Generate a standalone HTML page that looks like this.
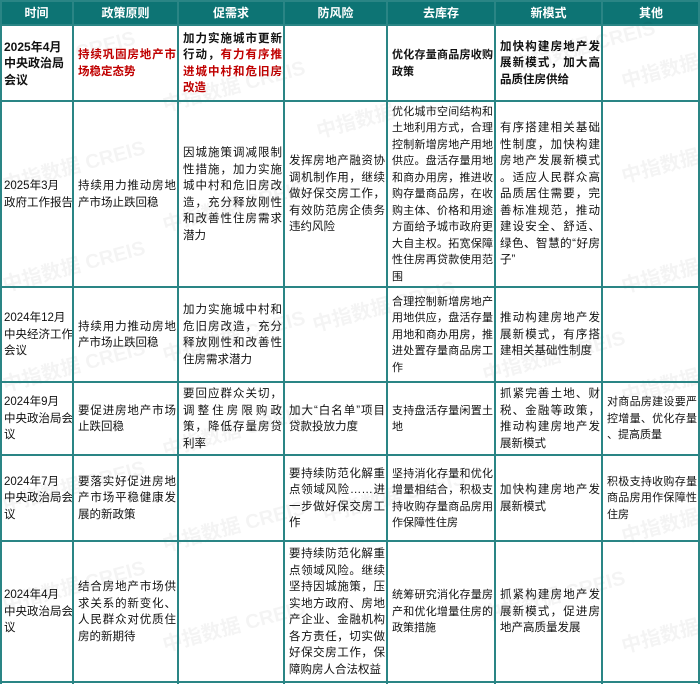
<!DOCTYPE html>
<html><head><meta charset="utf-8"><style>
*{margin:0;padding:0;box-sizing:border-box}
body{width:700px;height:684px;background:#fff;position:relative;overflow:hidden;font-family:"Liberation Sans","Noto Sans CJK SC",sans-serif;font-size:11.5px;color:#111}
.c{position:absolute;display:flex;align-items:center;padding:0 2px 0 3px;overflow:hidden}
.s{font-size:11px}
.t{width:100%;line-height:16.5px}
.t p{text-align:justify;text-align-last:justify;white-space:nowrap;letter-spacing:0}
.t p.l{text-align-last:left}
.b{font-weight:bold}
.r{color:#c00000;font-weight:bold}
.h{position:absolute;top:0;height:25px;background:#0d7474;color:#fff;font-weight:bold;font-size:12px;display:flex;align-items:center;justify-content:center}
.vl{position:absolute;top:0;width:2px;height:684px;background:#2a8585}
.hl{position:absolute;left:0;width:700px;height:2px;background:#2a8585}
.w{position:absolute;color:rgba(0,0,0,0.045);font-size:20px;font-weight:bold;transform:rotate(-15deg);white-space:nowrap;pointer-events:none}
</style></head><body>
<div class="h" style="left:0;width:73px">时间</div>
<div class="h" style="left:73px;width:105px">政策原则</div>
<div class="h" style="left:178px;width:106px">促需求</div>
<div class="h" style="left:284px;width:103px">防风险</div>
<div class="h" style="left:387px;width:108px">去库存</div>
<div class="h" style="left:495px;width:107px">新模式</div>
<div class="h" style="left:602px;width:98px">其他</div>

<div class="c b" style="left:1px;top:26px;width:72px;height:75px;font-size:12px"><div class="t"><p class="l">2025年4月</p><p class="l">中央政治局</p><p class="l">会议</p></div></div>
<div class="c" style="left:75px;top:26px;width:103px;height:75px"><div class="t r"><p>持续巩固房地产市</p><p class="l">场稳定态势</p></div></div>
<div class="c b" style="left:180px;top:26px;width:104px;height:75px"><div class="t"><p>加力实施城市更新</p><p>行动，<span class="r">有力有序推</span></p><p class="r">进城中村和危旧房</p><p class="l r">改造</p></div></div>
<div class="c b s" style="left:389px;top:26px;width:106px;height:75px"><div class="t"><p>优化存量商品房收购</p><p class="l">政策</p></div></div>
<div class="c b" style="left:497px;top:26px;width:105px;height:75px"><div class="t"><p>加快构建房地产发</p><p>展新模式，加大高</p><p class="l">品质住房供给</p></div></div>

<div class="c" style="left:1px;top:102px;width:72px;height:185px"><div class="t"><p class="l">2025年3月</p><p class="l">政府工作报告</p></div></div>
<div class="c" style="left:75px;top:102px;width:103px;height:185px"><div class="t"><p>持续用力推动房地</p><p class="l">产市场止跌回稳</p></div></div>
<div class="c" style="left:180px;top:102px;width:104px;height:185px"><div class="t"><p>因城施策调减限制</p><p>性措施，加力实施</p><p>城中村和危旧房改</p><p>造，充分释放刚性</p><p>和改善性住房需求</p><p class="l">潜力</p></div></div>
<div class="c" style="left:286px;top:102px;width:101px;height:185px"><div class="t"><p>发挥房地产融资协</p><p>调机制作用，继续</p><p>做好保交房工作，</p><p>有效防范房企债务</p><p class="l">违约风险</p></div></div>
<div class="c s" style="left:389px;top:102px;width:106px;height:185px"><div class="t"><p>优化城市空间结构和</p><p>土地利用方式，合理</p><p>控制新增房地产用地</p><p>供应。盘活存量用地</p><p>和商办用房，推进收</p><p>购存量商品房，在收</p><p>购主体、价格和用途</p><p>方面给予城市政府更</p><p>大自主权。拓宽保障</p><p>性住房再贷款使用范</p><p class="l">围</p></div></div>
<div class="c" style="left:497px;top:102px;width:105px;height:185px"><div class="t"><p>有序搭建相关基础</p><p>性制度，加快构建</p><p>房地产发展新模式</p><p>。适应人民群众高</p><p>品质居住需要，完</p><p>善标准规范，推动</p><p>建设安全、舒适、</p><p>绿色、智慧的“好房</p><p class="l">子”</p></div></div>

<div class="c" style="left:1px;top:288px;width:72px;height:94px"><div class="t"><p class="l">2024年12月</p><p class="l">中央经济工作</p><p class="l">会议</p></div></div>
<div class="c" style="left:75px;top:288px;width:103px;height:94px"><div class="t"><p>持续用力推动房地</p><p class="l">产市场止跌回稳</p></div></div>
<div class="c" style="left:180px;top:288px;width:104px;height:94px"><div class="t"><p>加力实施城中村和</p><p>危旧房改造，充分</p><p>释放刚性和改善性</p><p class="l">住房需求潜力</p></div></div>
<div class="c s" style="left:389px;top:288px;width:106px;height:94px"><div class="t"><p>合理控制新增房地产</p><p>用地供应，盘活存量</p><p>用地和商办用房，推</p><p>进处置存量商品房工</p><p class="l">作</p></div></div>
<div class="c" style="left:497px;top:288px;width:105px;height:94px"><div class="t"><p>推动构建房地产发</p><p>展新模式，有序搭</p><p class="l">建相关基础性制度</p></div></div>

<div class="c" style="left:1px;top:383px;width:72px;height:72px"><div class="t"><p class="l">2024年9月</p><p class="l">中央政治局会</p><p class="l">议</p></div></div>
<div class="c" style="left:75px;top:383px;width:103px;height:72px"><div class="t"><p>要促进房地产市场</p><p class="l">止跌回稳</p></div></div>
<div class="c" style="left:180px;top:383px;width:104px;height:72px"><div class="t"><p>要回应群众关切，</p><p>调整住房限购政</p><p>策，降低存量房贷</p><p class="l">利率</p></div></div>
<div class="c" style="left:286px;top:383px;width:101px;height:72px"><div class="t"><p>加大“白名单”项目</p><p class="l">贷款投放力度</p></div></div>
<div class="c s" style="left:389px;top:383px;width:106px;height:72px"><div class="t"><p>支持盘活存量闲置土</p><p class="l">地</p></div></div>
<div class="c" style="left:497px;top:383px;width:105px;height:72px"><div class="t"><p>抓紧完善土地、财</p><p>税、金融等政策，</p><p>推动构建房地产发</p><p class="l">展新模式</p></div></div>
<div class="c s" style="left:604px;top:383px;width:95px;height:72px"><div class="t"><p>对商品房建设要严</p><p>控增量、优化存量</p><p class="l">、提高质量</p></div></div>

<div class="c" style="left:1px;top:456px;width:72px;height:85px"><div class="t"><p class="l">2024年7月</p><p class="l">中央政治局会</p><p class="l">议</p></div></div>
<div class="c" style="left:75px;top:456px;width:103px;height:85px"><div class="t"><p>要落实好促进房地</p><p>产市场平稳健康发</p><p class="l">展的新政策</p></div></div>
<div class="c" style="left:286px;top:456px;width:101px;height:85px"><div class="t"><p>要持续防范化解重</p><p>点领域风险……进</p><p>一步做好保交房工</p><p class="l">作</p></div></div>
<div class="c s" style="left:389px;top:456px;width:106px;height:85px"><div class="t"><p>坚持消化存量和优化</p><p>增量相结合，积极支</p><p>持收购存量商品房用</p><p class="l">作保障性住房</p></div></div>
<div class="c" style="left:497px;top:456px;width:105px;height:85px"><div class="t"><p>加快构建房地产发</p><p class="l">展新模式</p></div></div>
<div class="c s" style="left:604px;top:456px;width:95px;height:85px"><div class="t"><p>积极支持收购存量</p><p>商品房用作保障性</p><p class="l">住房</p></div></div>

<div class="c" style="left:1px;top:542px;width:72px;height:140px"><div class="t"><p class="l">2024年4月</p><p class="l">中央政治局会</p><p class="l">议</p></div></div>
<div class="c" style="left:75px;top:542px;width:103px;height:140px"><div class="t"><p>结合房地产市场供</p><p>求关系的新变化、</p><p>人民群众对优质住</p><p class="l">房的新期待</p></div></div>
<div class="c" style="left:286px;top:542px;width:101px;height:140px"><div class="t"><p>要持续防范化解重</p><p>点领域风险。继续</p><p>坚持因城施策，压</p><p>实地方政府、房地</p><p>产企业、金融机构</p><p>各方责任，切实做</p><p>好保交房工作，保</p><p class="l">障购房人合法权益</p></div></div>
<div class="c s" style="left:389px;top:542px;width:106px;height:140px"><div class="t"><p>统筹研究消化存量房</p><p>产和优化增量住房的</p><p class="l">政策措施</p></div></div>
<div class="c" style="left:497px;top:542px;width:105px;height:140px"><div class="t"><p>抓紧构建房地产发</p><p>展新模式，促进房</p><p class="l">地产高质量发展</p></div></div>

<div class="w" style="left:75px;top:35px">CREIS</div>
<div class="w" style="left:160px;top:70px">中指数据 CREIS</div>
<div class="w" style="left:510px;top:30px">中指数据 CREIS</div>
<div class="w" style="left:620px;top:55px">中指数据</div>
<div class="w" style="left:315px;top:105px">中指数据</div>
<div class="w" style="left:0px;top:150px">中指数据 CREIS</div>
<div class="w" style="left:160px;top:190px">中指数据 CREIS</div>
<div class="w" style="left:620px;top:150px">中指数据</div>
<div class="w" style="left:0px;top:250px">中指数据 CREIS</div>
<div class="w" style="left:310px;top:290px">中指数据 CREIS</div>
<div class="w" style="left:160px;top:320px">中指数据 CREIS</div>
<div class="w" style="left:620px;top:260px">中指数据</div>
<div class="w" style="left:480px;top:340px">中指数据 CREIS</div>
<div class="w" style="left:620px;top:370px">中指数据</div>
<div class="w" style="left:0px;top:350px">中指数据 CREIS</div>
<div class="w" style="left:160px;top:415px">中指数据 CREIS</div>
<div class="w" style="left:0px;top:470px">中指数据 CREIS</div>
<div class="w" style="left:320px;top:480px">中指数据 CREIS</div>
<div class="w" style="left:160px;top:510px">中指数据 CREIS</div>
<div class="w" style="left:620px;top:510px">中指数据</div>
<div class="w" style="left:480px;top:580px">中指数据 CREIS</div>
<div class="w" style="left:0px;top:570px">中指数据 CREIS</div>
<div class="w" style="left:160px;top:610px">中指数据 CREIS</div>
<div class="w" style="left:620px;top:620px">中指数据</div>

<div class="vl" style="left:0"></div>
<div class="vl" style="left:72px"></div>
<div class="vl" style="left:177px"></div>
<div class="vl" style="left:283px"></div>
<div class="vl" style="left:386px"></div>
<div class="vl" style="left:494px"></div>
<div class="vl" style="left:601px"></div>
<div class="vl" style="left:698px"></div>
<div class="hl" style="top:0"></div>
<div class="hl" style="top:24px"></div>
<div class="hl" style="top:100px"></div>
<div class="hl" style="top:286px"></div>
<div class="hl" style="top:381px"></div>
<div class="hl" style="top:454px"></div>
<div class="hl" style="top:540px"></div>
<div class="hl" style="top:681px"></div>
</body></html>
